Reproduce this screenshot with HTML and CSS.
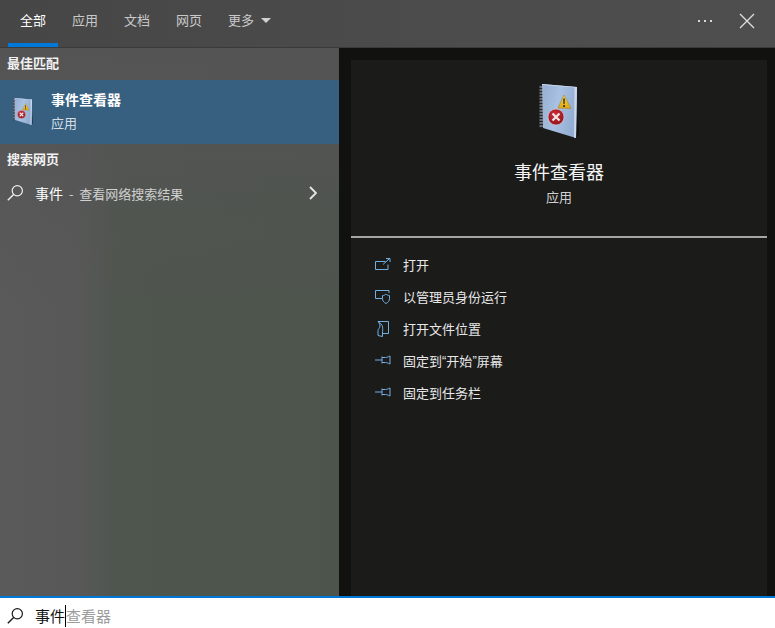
FILE: index.html
```html
<!DOCTYPE html>
<html lang="zh-CN">
<head>
<meta charset="utf-8">
<title>事件查看器</title>
<link rel="stylesheet" href="styles.css">
</head>
<body>
<svg class="defs" width="0" height="0" aria-hidden="true">
  <defs>
    <linearGradient id="cover" x1="0" y1="0" x2="1" y2="0.3">
      <stop offset="0" stop-color="#93aed2"/><stop offset="0.5" stop-color="#a9c1e2"/><stop offset="1" stop-color="#94aed3"/>
    </linearGradient>
    <radialGradient id="stop" cx="0.45" cy="0.35" r="0.7">
      <stop offset="0" stop-color="#d22c38"/><stop offset="1" stop-color="#8a141e"/>
    </radialGradient>
    <linearGradient id="warn" x1="0" y1="0" x2="0" y2="1">
      <stop offset="0" stop-color="#f8d84a"/><stop offset="1" stop-color="#dfa512"/>
    </linearGradient>
    <symbol id="book" viewBox="0 0 40 56">
      <path d="M36 14 41 50 36 55Z" fill="#000" opacity=".35"/>
      <path d="M3 0 38 3 37 54 4 44Z" fill="url(#cover)"/>
      <path d="M35.500 3 38 3 37 54 35 53.400Z" fill="#cbd9ec"/>
      <path d="M3 0 38 3 35.500 3.500 3 1Z" fill="#c9d8ec"/>
      <path d="M.5 1.500V44.500H3V1.500Z" fill="#23272d"/>
      <path d="M.5 3h5M.5 6h5M.5 9h5M.5 12h5M.5 15h5M.5 18h5M.5 21h5M.5 24h5M.5 27h5M.5 30h5M.5 33h5M.5 36h5M.5 39h5M.5 42h5" stroke="#aeb6c2" stroke-width="1.200"/>
      <path d="M25 11 32 24.500 19 24Z" fill="url(#warn)" stroke="#9c7d12" stroke-width=".5"/>
      <path d="M24.300 14.500h1.500l-.3 5.500h-1zM24.300 21h1.500v2h-1.500z" fill="#1d1d1d"/>
      <circle cx="17" cy="33" r="8" fill="url(#stop)" stroke="#d9c9cc" stroke-width=".7"/>
      <path d="M13.500 29.500 20.500 36.500M20.500 29.500 13.500 36.500" stroke="#efe6e6" stroke-width="2.200"/>
    </symbol>
    <symbol id="search" viewBox="0 0 16 16">
      <circle cx="10.300" cy="5.700" r="5.100" fill="none" stroke="currentColor" stroke-width="1.200"/>
      <path d="M6.600 9.400 .8 15.200" stroke="currentColor" stroke-width="1.400" fill="none"/>
    </symbol>
  </defs>
</svg>
<main class="flyout">
  <nav class="tabs">
    <a class="tab tab-active">全部</a>
    <a class="tab">应用</a>
    <a class="tab">文档</a>
    <a class="tab">网页</a>
    <a class="tab tab-more">更多<span class="caret"></span></a>
    <span class="tabs-fill"></span>
    <span class="dots"><i></i><i></i><i></i></span>
    <svg class="close" width="16" height="16" viewBox="0 0 16 16"><path d="M1 1 15 15M15 1 1 15" stroke="#dcdcdc" stroke-width="1.400" fill="none"/></svg>
  </nav>
  <div class="content">
    <section class="results">
      <h2 class="group-title">最佳匹配</h2>
      <div class="best">
        <svg class="best-icon"><use href="#book"/></svg>
        <div class="best-text">
          <div class="best-name">事件查看器</div>
          <div class="best-kind">应用</div>
        </div>
      </div>
      <h2 class="group-title group-web">搜索网页</h2>
      <div class="web-row">
        <svg class="web-icon"><use href="#search"/></svg>
        <span class="web-text"><b>事件</b> - 查看网络搜索结果</span>
        <svg class="chev" width="8" height="14" viewBox="0 0 8 14"><path d="M1 1 7 7 1 13" stroke="#e6e6e6" stroke-width="1.800" fill="none"/></svg>
      </div>
    </section>
    <section class="detail">
      <div class="detail-head">
        <svg class="detail-icon"><use href="#book"/></svg>
        <div class="detail-name">事件查看器</div>
        <div class="detail-kind">应用</div>
      </div>
      <ul class="actions">
        <li class="action">
          <svg class="a-icon" viewBox="0 0 16 16"><path d="M10.500 4.500H.5v8h12.500V7.500M8 7.500 14.500 1.500M11 1.500h4V5"/></svg>打开</li>
        <li class="action">
          <svg class="a-icon" viewBox="0 0 16 16"><path d="M7 9.500H.5V1.500h13.500v2.500M7.500 6.500c1.500 0 2.500-.5 3.500-1.500 1 1 2 1.500 3.500 1.500v3c0 2.500-1.500 4-3.500 5-2-1-3.500-2.500-3.500-5z"/></svg>以管理员身份运行</li>
        <li class="action">
          <svg class="a-icon" viewBox="0 0 16 16"><path d="M3 .5h10.500v12H8M3 .5c1.500 2 2 3 2 4.500 0 2-2 3-2 4.500v5l4.500 1v-3.500c0-2 .5-4 0-6.500C7 3.500 5 2 3 .5z"/></svg>打开文件位置</li>
        <li class="action">
          <svg class="a-icon" viewBox="0 0 16 16"><path d="M0 7H7M7 3.500v7M7 4.500h3.500c1 0 2-.5 4.500-1.500v8c-2.500-1-3.500-1.500-4.500-1.500H7"/></svg>固定到<span class="q">“</span>开始<span class="q">”</span>屏幕</li>
        <li class="action">
          <svg class="a-icon" viewBox="0 0 16 16"><path d="M0 7H7M7 3.500v7M7 4.500h3.500c1 0 2-.5 4.500-1.500v8c-2.500-1-3.500-1.500-4.500-1.500H7"/></svg>固定到任务栏</li>
      </ul>
    </section>
  </div>
  <div class="searchbar">
    <svg class="bar-icon"><use href="#search"/></svg>
    <span class="typed">事件</span><span class="caret-line"></span><span class="hint">查看器</span>
  </div>
</main>
</body>
</html>
```
FILE: styles.css
```css
* { box-sizing: border-box; }
html, body { margin: 0; padding: 0; }
body {
  width: 775px;
  height: 628px;
  overflow: hidden;
  font-family: "Noto Sans CJK SC", "Liberation Sans", sans-serif;
  font-size: 14px;
  color: #fff;
  background: #111;
}
.defs { position: absolute; }
.flyout { display: flex; flex-direction: column; height: 628px; }

.tabs {
  height: 48px;
  flex: none;
  display: flex;
  gap: 2px;
  align-items: stretch;
  padding-left: 8px;
  background: linear-gradient(90deg, #464646, #4c4c4c 60%, #4e4e4e);
  border-bottom: 1px solid #3a3a3a;
}
.tab {
  width: 50px;
  font-size: 13px;
  line-height: 40px;
  text-align: center;
  color: #c9c9c9;
  border-bottom: 4px solid transparent;
  height: 47px;
}
.tab-active { color: #fff; border-bottom-color: #0078d7; }
.tab-more { width: 62px; padding-left: 12px; text-align: left; }
.caret {
  display: inline-block;
  width: 0; height: 0;
  margin-left: 7px;
  vertical-align: 2px;
  border: 5px solid transparent;
  border-bottom: 0;
  border-top: 5px solid #d2d2d2;
}
.tabs-fill { flex: 1; }
.dots { display: flex; gap: 4px; align-items: center; height: 41px; margin-right: 25px; }
.dots i { width: 2px; height: 2px; background: #d8d8d8; display: block; }
.close { margin: 13px 20px 0 0; }

.content { flex: 1; display: flex; min-height: 0; background: #111110; }
.results {
  width: 339px;
  background:
    linear-gradient(180deg, #545454 0, rgba(84, 84, 84, 0) 260px),
    linear-gradient(90deg, #5a5a5a 0, #585858 80px, #4f564e 115px, #4d544c 100%);
}
.group-title {
  margin: 0;
  font-size: 13px;
  font-weight: 700;
  line-height: 20px;
  padding: 5px 0 0 7px;
  height: 32px;
  color: #f2f2f2;
}
.best {
  height: 64px;
  background: #365f80;
  display: flex;
  align-items: center;
}
.best-icon { width: 20px; height: 28px; margin: 0 18px 0 13px; }
.best-name { font-size: 14px; font-weight: 700; line-height: 20px; margin-top: -3px; }
.best-kind { font-size: 13px; line-height: 20px; margin-top: 4px; color: #d5dde4; }
.group-web { height: 32px; }
.web-row { display: flex; align-items: center; height: 34px; }
.web-icon { width: 16px; height: 16px; margin: 0 12px 0 7px; color: #efefef; flex: none; }
.web-text { flex: 1; font-size: 13px; color: #cfd0cf; line-height: 20px; word-spacing: 3px; }
.web-text b { font-weight: 400; font-size: 14px; color: #fff; }
.chev { margin-right: 22px; }

.detail {
  margin: 12px 8px 0 12px;
  flex: 1;
  background: #1b1b1a;
}
.detail-head {
  height: 178px;
  display: flex;
  flex-direction: column;
  align-items: center;
  border-bottom: 2px solid #a6a6a6;
  padding-top: 24px;
}
.detail-icon { width: 40px; height: 56px; }
.detail-name { font-size: 18px; line-height: 26px; margin-top: 18px; color: #f4f4f4; }
.detail-kind { font-size: 13px; line-height: 20px; margin-top: 3px; color: #d0d0d0; }
.actions { list-style: none; margin: 10px 0 0; padding: 0; }
.action {
  height: 32px;
  display: flex;
  align-items: center;
  padding-left: 24px;
  font-size: 13px;
  color: #e8e8e8;
}
.q { font-family: "Liberation Sans", sans-serif; }
.a-icon {
  width: 16px;
  height: 16px;
  margin-right: 12px;
  margin-top: 2px;
  fill: none;
  stroke: #72b0e4;
  stroke-width: 1;
  flex: none;
}

.searchbar {
  height: 32px;
  flex: none;
  background: #fff;
  border-top: 2px solid #0078d7;
  display: flex;
  align-items: center;
  padding-top: 6px;
  color: #111;
}
.bar-icon { width: 16px; height: 16px; margin: 0 12px 0 7px; color: #1a1a1a; flex: none; }
.typed { font-size: 15px; line-height: 20px; }
.caret-line { width: 1px; height: 22px; background: #000; }
.hint { font-size: 15px; line-height: 20px; color: #9c9c9c; }
```
